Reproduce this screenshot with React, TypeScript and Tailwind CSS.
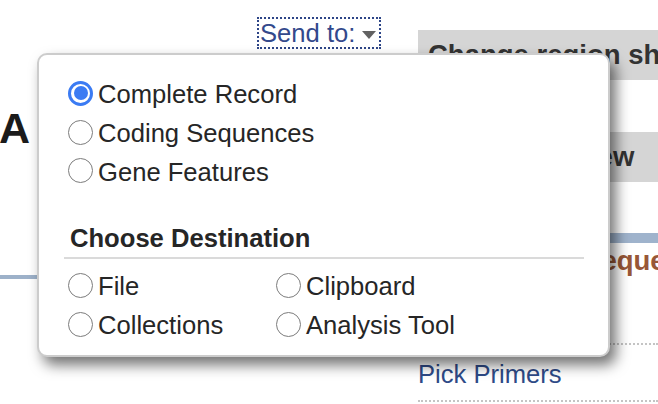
import React from 'react';

const DEST = [
  ['File', 'Clipboard'],
  ['Collections', 'Analysis Tool'],
];

function Radio({ checked = false }: { checked?: boolean }) {
  if (checked) {
    return (
      <span className="mb-[2px] ml-[4px] flex h-[25px] w-[25px] shrink-0 items-center justify-center rounded-full border-[3px] border-[#3b7bf3] bg-white">
        <span className="h-[14px] w-[14px] rounded-full bg-[#3b7bf3]" />
      </span>
    );
  }
  return <span className="mb-[2px] ml-[4px] h-[25px] w-[25px] shrink-0 rounded-full border-[1.5px] border-[#7c7c7c] bg-white" />;
}

function Option({ label, checked }: { label: string; checked?: boolean }) {
  return (
    <label className="flex h-[38.8px] items-center gap-[5px] leading-[38.8px] whitespace-nowrap">
      <Radio checked={checked} />
      <span>{label}</span>
    </label>
  );
}

export default function App() {
  return (
    <div className="relative h-[404px] w-[658px] overflow-hidden bg-white font-['Liberation_Sans',Arial,sans-serif] text-[25.6px]">
      <div className="flex">
        {/* left / content column */}
        <div className="w-[418px] shrink-0">
          <div className="pt-[17px] pl-[257px]">
            <div className="flex h-[32px] w-[124px] items-center border-2 border-dotted border-[#2d4587] pl-[1px] leading-[28px] text-[#33498c]">
              <span>Send to:</span>
              <svg width="14" height="8" viewBox="0 0 14 8" className="ml-[7px] mt-[3px]">
                <path d="M0 0 L14 0 L7 8 Z" fill="#626262" />
              </svg>
            </div>
          </div>
          <div className="-ml-[1px] mt-[58px] text-[43px] font-bold leading-[43px] text-[#1b1b1b]">A</div>
          <div className="mt-[125px] h-[4px] w-full bg-[#9db1c9]" />
        </div>

        {/* right column */}
        <div className="w-[240px] shrink-0 whitespace-nowrap">
          <div className="mt-[30px] h-[50px] overflow-hidden bg-[#d5d5d5] pl-[10px] text-[27.5px] font-bold leading-[50px] text-[#333]">
            Change region shown
          </div>
          <div className="mt-[52px] h-[50px] overflow-hidden bg-[#d5d5d5] pl-[10px] text-[27.5px] font-bold leading-[50px] text-[#333]">
            Customize view
          </div>
          <div className="mt-[51px] h-[10px] bg-[#9fb3cc]" />
          <div className="mt-[3px] text-[27.5px] font-bold leading-[30px] text-[#985737]">Analyze this sequence</div>
          <ul>
            <li className="mt-[12px] border-b-2 border-dotted border-[#c4c4c4] pt-[14px] pb-[11px] leading-[30px] text-[#2e4a87]">Run BLAST</li>
            <li className="border-b-2 border-dotted border-[#c4c4c4] pt-[14px] pb-[11px] leading-[30px] text-[#2e4a87]">Pick Primers</li>
          </ul>
        </div>
      </div>

      {/* Send to popup */}
      <div className="absolute top-[53px] left-[37px] h-[304px] w-[573px] rounded-[10px] border-2 border-[#cccccc] bg-white pt-[20px] pl-[25px] text-[#262626] shadow-[6px_8px_14px_rgba(0,0,0,0.55)]">
        <Option label="Complete Record" checked />
        <Option label="Coding Sequences" />
        <Option label="Gene Features" />

        <div className="mt-[32px] w-[520px] border-b-2 border-[#dadada] pb-[4px] pl-[6px] font-bold leading-[30px]">
          Choose Destination
        </div>
        <div className="mt-[8px] w-[520px]">
          {DEST.map(row => (
            <div key={row[0]} className="grid grid-cols-[208px_1fr]">
              {row.map(label => (
                <label key={label} className="flex h-[38.5px] items-center gap-[5px] leading-[38.5px] whitespace-nowrap">
                  <Radio />
                  <span>{label}</span>
                </label>
              ))}
            </div>
          ))}
        </div>
      </div>
    </div>
  );
}
